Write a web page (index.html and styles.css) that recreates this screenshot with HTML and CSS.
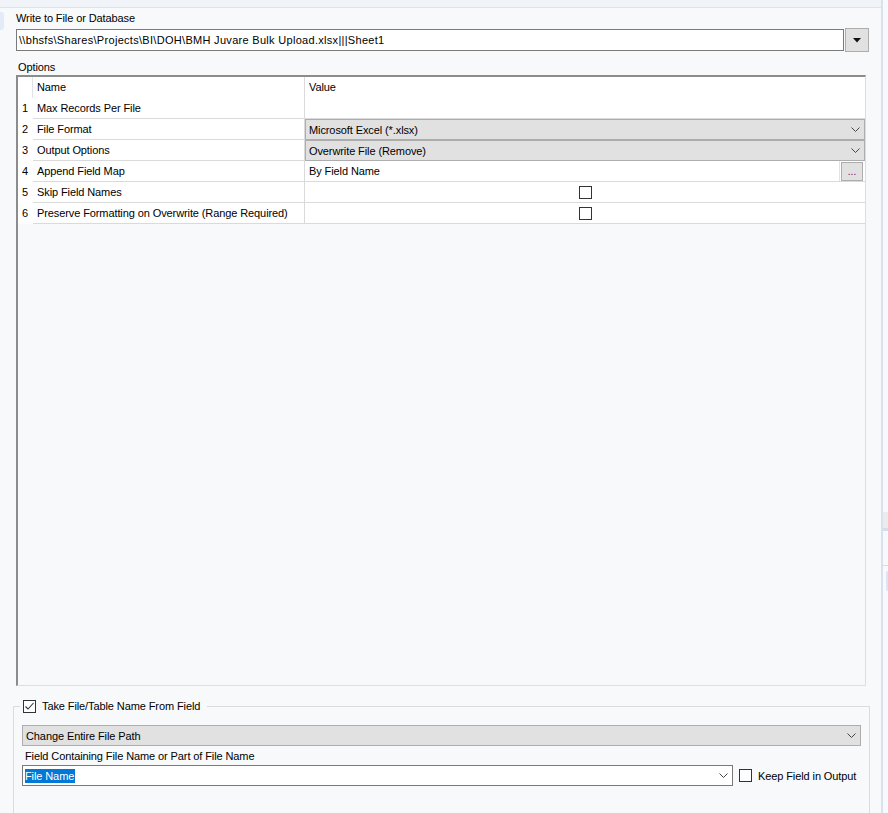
FILE: index.html
```html
<!DOCTYPE html>
<html>
<head>
	<meta charset="utf-8">
	<title>Output Data</title>
	<link rel="stylesheet" href="styles.css">
</head>
<body>
	<div class="frame">
		<div class="main">
			<div class="topbar"></div>
			<div class="body-row">
				<div class="edge"></div>
				<div class="content">
					<div class="cap">Write to File or Database</div>
					<div class="path-row">
						<div class="path-input">\\bhsfs\Shares\Projects\BI\DOH\BMH Juvare Bulk Upload.xlsx|||Sheet1</div>
						<div class="drop-btn">
							<svg width="8" height="5" viewBox="0 0 8 5"><polygon points="0,0 8,0 4,4.5" fill="#111"/></svg>
						</div>
					</div>

					<div class="cap options-cap">Options</div>
					<div class="grid">
						<div class="row head">
							<div class="num"></div>
							<div class="name">Name</div>
							<div class="val">Value</div>
						</div>
						<div class="row">
							<div class="num">1</div>
							<div class="name">Max Records Per File</div>
							<div class="val"></div>
						</div>
						<div class="row">
							<div class="num">2</div>
							<div class="name">File Format</div>
							<div class="val combo-cell">
								<div class="combo">
									<span>Microsoft Excel (*.xlsx)</span>
									<svg class="chev" width="9" height="5" viewBox="0 0 9 5"><polyline points="0.5,0.5 4.5,4.5 8.5,0.5" fill="none" stroke="#444" stroke-width="1"/></svg>
								</div>
							</div>
						</div>
						<div class="row">
							<div class="num">3</div>
							<div class="name">Output Options</div>
							<div class="val combo-cell">
								<div class="combo">
									<span>Overwrite File (Remove)</span>
									<svg class="chev" width="9" height="5" viewBox="0 0 9 5"><polyline points="0.5,0.5 4.5,4.5 8.5,0.5" fill="none" stroke="#444" stroke-width="1"/></svg>
								</div>
							</div>
						</div>
						<div class="row">
							<div class="num">4</div>
							<div class="name">Append Field Map</div>
							<div class="val map-cell">
								<span>By Field Name</span>
								<div class="dots-wrap"><div class="dots-btn">...</div></div>
							</div>
						</div>
						<div class="row">
							<div class="num">5</div>
							<div class="name">Skip Field Names</div>
							<div class="val check-cell"><span class="box"></span></div>
						</div>
						<div class="row">
							<div class="num">6</div>
							<div class="name">Preserve Formatting on Overwrite (Range Required)</div>
							<div class="val check-cell"><span class="box"></span></div>
						</div>
					</div>

					<fieldset class="group">
						<legend>
							<span class="box checked">
								<svg width="11" height="11" viewBox="0 0 11 11"><polyline points="1.5,5.5 4,8 9.5,2" fill="none" stroke="#333" stroke-width="1.1"/></svg>
							</span>
							<span>Take File/Table Name From Field</span>
						</legend>
						<div class="combo wide">
							<span>Change Entire File Path</span>
							<svg class="chev" width="9" height="5" viewBox="0 0 9 5"><polyline points="0.5,0.5 4.5,4.5 8.5,0.5" fill="none" stroke="#444" stroke-width="1"/></svg>
						</div>
						<div class="cap field-cap">Field Containing File Name or Part of File Name</div>
						<div class="field-row">
							<div class="combo white">
								<span class="sel">File Name</span>
								<svg class="chev" width="9" height="5" viewBox="0 0 9 5"><polyline points="0.5,0.5 4.5,4.5 8.5,0.5" fill="none" stroke="#444" stroke-width="1"/></svg>
							</div>
							<span class="box"></span>
							<span class="keep">Keep Field in Output</span>
						</div>
					</fieldset>
				</div>
			</div>
		</div>
		<div class="side">
			<div class="side-gap"></div>
			<div class="side-gray"></div>
			<div class="side-line"></div>
			<div class="side-gap2"></div>
			<div class="side-rule"></div>
			<div class="side-blue"></div>
		</div>
	</div>
</body>
</html>
```

FILE: styles.css
```css
* {
	margin: 0;
	padding: 0;
	box-sizing: border-box;
}
body {
	width: 888px;
	height: 813px;
	overflow: hidden;
	background: #f8f9fb;
	font-family: "Liberation Sans", Arial, sans-serif;
	font-size: 11px;
	letter-spacing: -0.1px;
	color: #000;
}
.frame {
	display: flex;
	height: 813px;
	overflow: hidden;
}
.main {
	width: 881px;
}
.topbar {
	height: 8px;
	background: #f0f4f9;
	border-bottom: 1px solid #dbe3ee;
}
.body-row {
	display: flex;
}
.edge {
	width: 4px;
	height: 18px;
	margin-top: 4px;
	background: #e2ebf7;
	border-radius: 0 3px 3px 0;
}
.content {
	flex: 1;
	padding-left: 12px;
}

.cap {
	height: 14px;
	line-height: 14px;
	margin-top: 3px;
	white-space: nowrap;
}
.path-row {
	display: flex;
	align-items: center;
	gap: 1px;
	height: 24px;
	margin-top: 3px;
}
.path-input {
	width: 828px;
	height: 22px;
	border: 1px solid #7a7a7a;
	background: #fff;
	padding-left: 2px;
	line-height: 20px;
	letter-spacing: 0.3px;
	white-space: nowrap;
}
.drop-btn {
	width: 24px;
	height: 24px;
	border: 1px solid #adadad;
	background: #e1e1e1;
	display: flex;
	align-items: center;
	justify-content: center;
}
.options-cap {
	margin-top: 8px;
	padding-left: 2px;
}

/* property grid */
.grid {
	width: 850px;
	height: 611px;
	margin-top: 1px;
	border-style: solid;
	border-width: 2px 1px 1px 2px;
	border-color: #8c8c8c #dedede #dedede #8c8c8c;
	background: #f8f9fb;
}
.row {
	display: grid;
	grid-template-columns: 15px 272px 560px;
	height: 21px;
	background: #fff;
}
.num {
	padding-left: 4px;
	line-height: 20px;
}
.head .num {
	border-right: 1px solid #e3e3e3;
}
.name {
	padding-left: 4px;
	line-height: 20px;
	border-right: 1px solid #dadada;
	border-bottom: 1px solid #dadada;
	white-space: nowrap;
}
.val {
	padding-left: 4px;
	line-height: 20px;
	border-bottom: 1px solid #dadada;
}
.head .name,
.head .val {
	border-bottom: 0;
	line-height: 21px;
}
.combo-cell {
	padding: 0;
	border-bottom: 0;
}
.combo {
	height: 21px;
	border: 1px solid #adadad;
	background: #e1e1e1;
	display: flex;
	align-items: center;
	justify-content: space-between;
	padding: 0 4px 0 3px;
	white-space: nowrap;
}
.chev {
	display: block;
}
.map-cell {
	display: flex;
	justify-content: space-between;
	padding-right: 2px;
}
.dots-wrap {
	border-left: 1px solid #e3e3e3;
	padding: 1px 0 0 1px;
}
.dots-btn {
	width: 22px;
	height: 19px;
	border: 1px solid #adadad;
	background: #e1e1e1;
	color: #800080;
	text-align: center;
	line-height: 18px;
	font-size: 10px;
	letter-spacing: 0;
}
.check-cell {
	display: flex;
	align-items: center;
	justify-content: center;
	padding: 0;
}
.box {
	display: inline-block;
	width: 13px;
	height: 13px;
	border: 1px solid #333;
	background: #fff;
}
.box svg {
	display: block;
}

/* lower group */
.group {
	margin: 13px 0 0 -3px;
	width: 857px;
	height: 115px;
	border: 1px solid #dcdcdc;
	padding: 0 6px;
}
.group legend {
	display: flex;
	align-items: center;
	gap: 6px;
	height: 14px;
	padding: 0 7px 0 3px;
}
.combo.wide {
	width: 839px;
	margin: 12px 0 0 2px;
}
.field-cap {
	margin-left: 5px;
}
.field-row {
	display: flex;
	align-items: center;
	margin: 2px 0 0 2px;
}
.combo.white {
	width: 711px;
	background: #fff;
	border-color: #7a7a7a;
	padding-left: 2px;
	margin-right: 6px;
}
.sel {
	background: #0078d7;
	color: #fff;
	line-height: 14px;
	padding: 0 1px 0 0;
}
.keep {
	margin-left: 6px;
	white-space: nowrap;
}

/* edge of the next panel */
.side {
	width: 7px;
	border-left: 2px solid #d8e2ef;
	background: #f7f9fc;
}
.side-gap {
	height: 512px;
}
.side-gray {
	height: 16px;
	background: #ebebeb;
}
.side-line {
	height: 3px;
	background: #d3deec;
}
.side-gap2 {
	height: 34px;
}
.side-rule {
	height: 1px;
	background: #dcdcdc;
}
.side-blue {
	height: 20px;
	margin: 5px 0 0 3px;
	background: #d7e6f8;
	border-radius: 3px 0 0 3px;
}
```
